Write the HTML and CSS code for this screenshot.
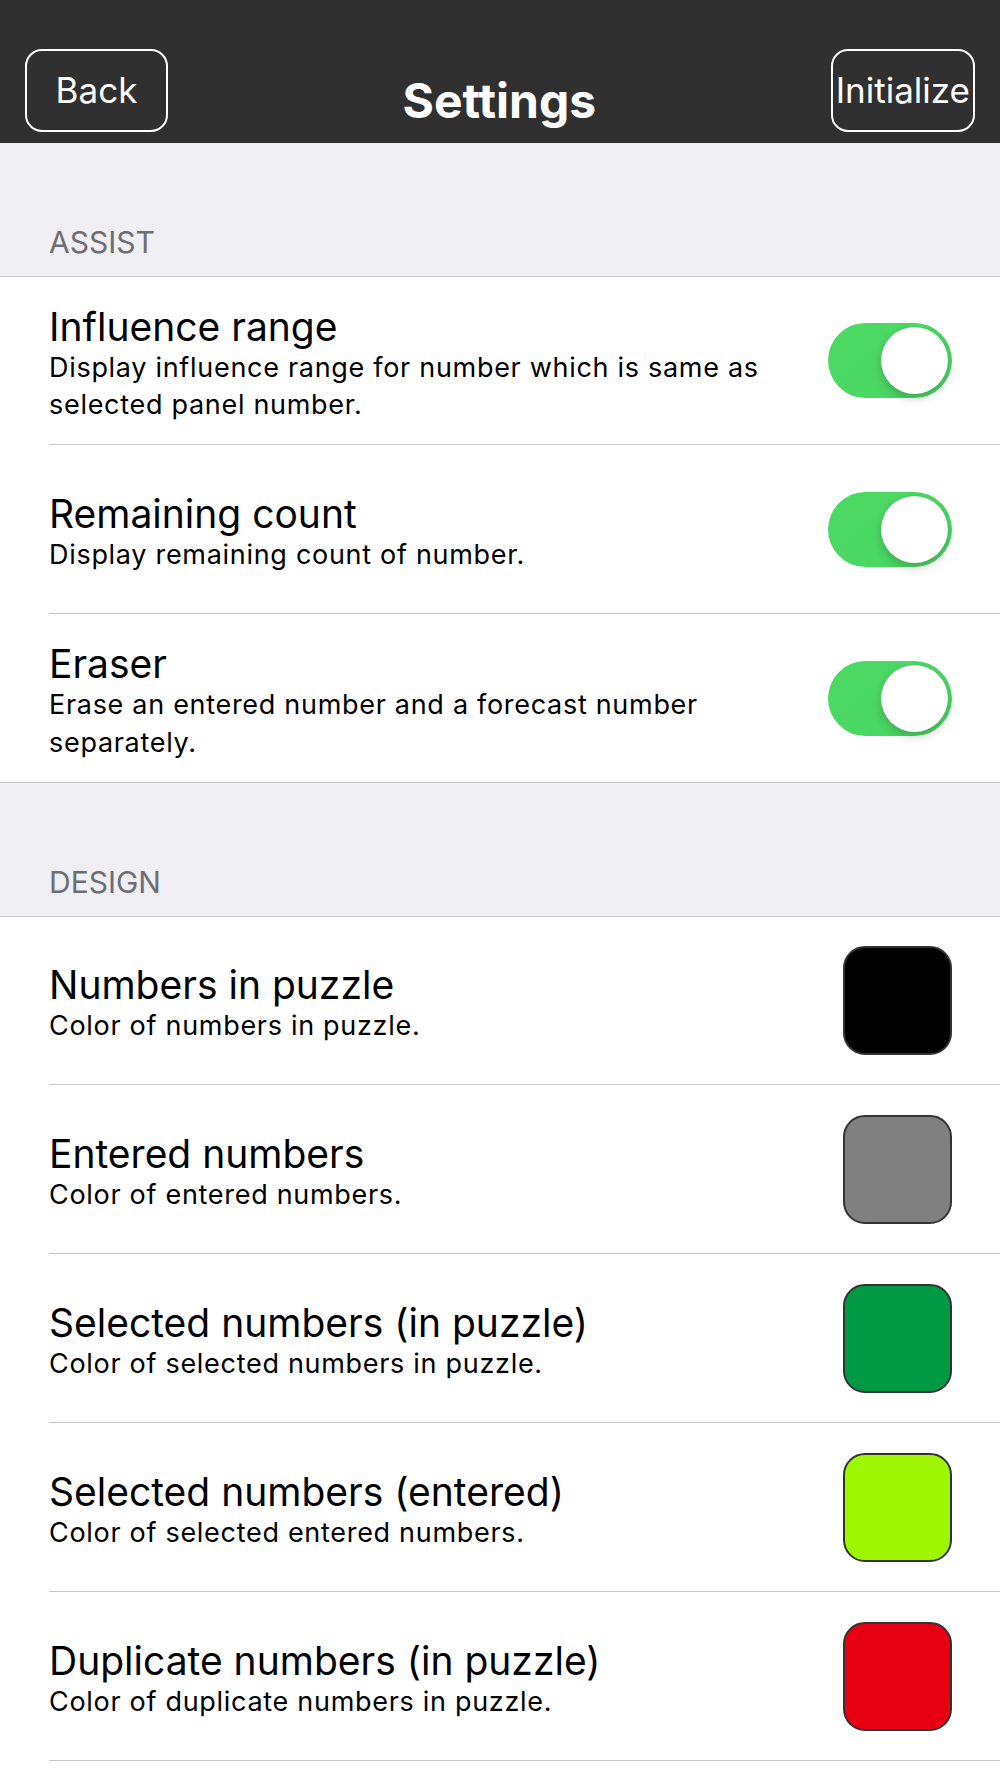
FILE: index.html
```html
<!DOCTYPE html>
<html lang="en">
<head>
    <meta charset="UTF-8">
    <meta name="viewport" content="width=device-width, initial-scale=1.0">
    <title>Settings</title>
    <link rel="stylesheet" href="styles.css">
</head>
<body>
    <header class="navbar">
        <button class="nav-btn" type="button">Back</button>
        <h1>Settings</h1>
        <button class="nav-btn" type="button">Initialize</button>
    </header>

    <div class="section-head">ASSIST</div>
    <ul class="group">
        <li class="row">
            <div class="row-inner">
                <div class="text">
                    <div class="title">Influence range</div>
                    <div class="desc">Display influence range for number which is same as selected panel number.</div>
                </div>
                <span class="switch on"></span>
            </div>
        </li>
        <li class="row">
            <div class="row-inner">
                <div class="text">
                    <div class="title">Remaining count</div>
                    <div class="desc">Display remaining count of number.</div>
                </div>
                <span class="switch on"></span>
            </div>
        </li>
        <li class="row last">
            <div class="row-inner">
                <div class="text">
                    <div class="title">Eraser</div>
                    <div class="desc">Erase an entered number and a forecast number separately.</div>
                </div>
                <span class="switch on"></span>
            </div>
        </li>
    </ul>

    <div class="section-head">DESIGN</div>
    <ul class="group">
        <li class="row">
            <div class="row-inner">
                <div class="text">
                    <div class="title">Numbers in puzzle</div>
                    <div class="desc">Color of numbers in puzzle.</div>
                </div>
                <span class="swatch" style="background-color: #000000;"></span>
            </div>
        </li>
        <li class="row">
            <div class="row-inner">
                <div class="text">
                    <div class="title">Entered numbers</div>
                    <div class="desc">Color of entered numbers.</div>
                </div>
                <span class="swatch" style="background-color: #808080;"></span>
            </div>
        </li>
        <li class="row">
            <div class="row-inner">
                <div class="text">
                    <div class="title">Selected numbers (in puzzle)</div>
                    <div class="desc">Color of selected numbers in puzzle.</div>
                </div>
                <span class="swatch" style="background-color: #009a44;"></span>
            </div>
        </li>
        <li class="row">
            <div class="row-inner">
                <div class="text">
                    <div class="title">Selected numbers (entered)</div>
                    <div class="desc">Color of selected entered numbers.</div>
                </div>
                <span class="swatch" style="background-color: #9ef700;"></span>
            </div>
        </li>
        <li class="row">
            <div class="row-inner">
                <div class="text">
                    <div class="title">Duplicate numbers (in puzzle)</div>
                    <div class="desc">Color of duplicate numbers in puzzle.</div>
                </div>
                <span class="swatch" style="background-color: #e60012;"></span>
            </div>
        </li>
    </ul>
</body>
</html>
```

FILE: styles.css
```css
body {
    margin: 0;
    font-family: 'Inter', 'Liberation Sans', sans-serif;
    background-color: #fff;
    color: #000;
}

.navbar {
    height: 143px;
    background-color: #303030;
    display: flex;
    align-items: flex-end;
    justify-content: space-between;
    padding: 0 25px 11px 25px;
    box-sizing: border-box;
}

.navbar h1 {
    margin: 0 0 3px 0;
    color: #fff;
    font-size: 48px;
    font-weight: 700;
    line-height: 56px;
}

.nav-btn {
    height: 83px;
    min-width: 143px;
    padding: 0 3px;
    background: transparent;
    color: #fff;
    border: 2px solid #fff;
    border-radius: 17px;
    font-family: inherit;
    font-size: 35px;
    line-height: 1;
    cursor: pointer;
}

.section-head {
    height: 134px;
    box-sizing: border-box;
    display: flex;
    align-items: flex-end;
    padding: 0 0 16px 49px;
    background-color: #efeff4;
    color: #6d6d72;
    font-size: 30px;
    line-height: 36px;
    border-bottom: 1px solid #c8c7cc;
}

.group {
    list-style: none;
    margin: 0;
    padding: 0;
    background-color: #fff;
}

.row {
    padding-left: 49px;
}

.row-inner {
    height: 169px;
    display: flex;
    align-items: center;
    justify-content: space-between;
    padding-right: 48px;
    box-sizing: border-box;
    border-bottom: 1px solid #c8c7cc;
}

.row:first-child .row-inner {
    height: 168px;
}

.row.last {
    padding-left: 0;
    border-bottom: 1px solid #c8c7cc;
}

.row.last .row-inner {
    height: 168px;
    margin-left: 49px;
    border-bottom: none;
}

.text {
    flex: 1;
    margin-top: 6px;
    padding-right: 40px;
}

.title {
    font-size: 39px;
    line-height: 45px;
}

.desc {
    font-size: 27px;
    line-height: 37.5px;
    letter-spacing: 0.7px;
}

.switch {
    position: relative;
    flex: none;
    width: 124px;
    height: 75px;
    border-radius: 38px;
    background: linear-gradient(135deg, #4cd964, #49d562);
}

.switch::after {
    content: "";
    position: absolute;
    top: 4px;
    right: 4px;
    width: 67px;
    height: 67px;
    border-radius: 50%;
    background-color: #fff;
    box-shadow: 0 5px 10px rgba(0, 0, 0, 0.18), 0 0 1px rgba(0, 0, 0, 0.2);
}

.swatch {
    flex: none;
    width: 105px;
    height: 105px;
    border: 2px solid #333;
    border-radius: 22px;
}
```
